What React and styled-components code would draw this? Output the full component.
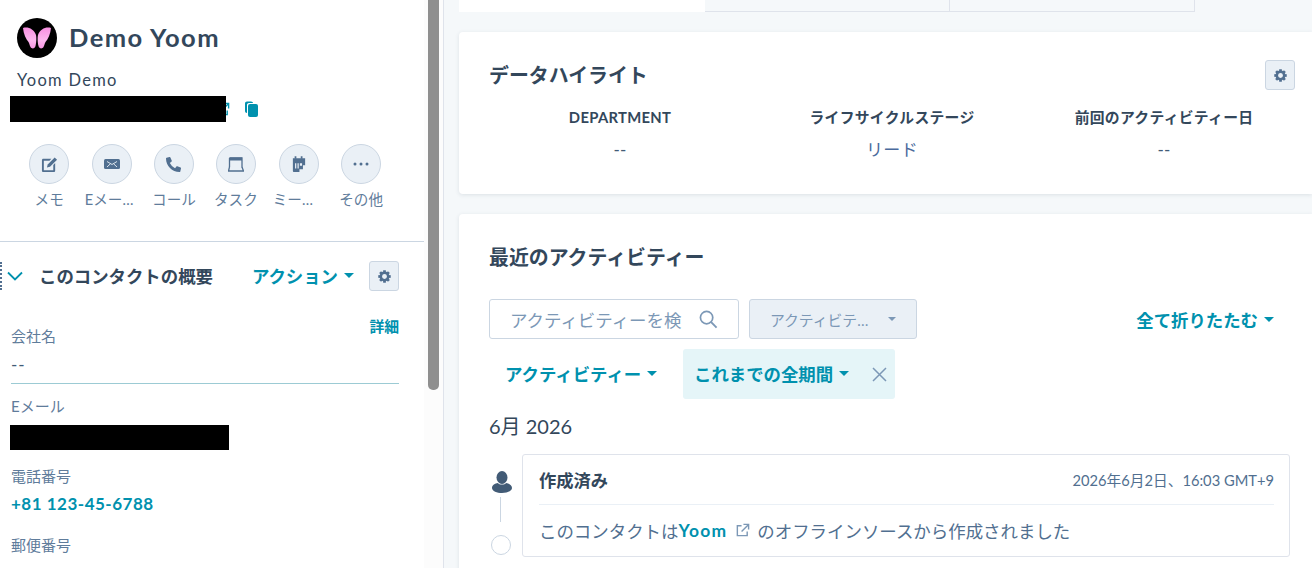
import React from 'react'
import styled, { createGlobalStyle } from 'styled-components'
import { FaPhoneAlt } from 'react-icons/fa'

const teal = '#0091ae'
const slate = '#33475b'
const muted = '#516f90'
const soft = '#7c98b6'

const Global = createGlobalStyle`
  html, body { margin: 0; padding: 0; height: 100%; overflow: hidden; }
  body {
    font-family: "Lato", "Noto Sans CJK JP", sans-serif;
    color: ${slate};
    background: #f5f8fa;
  }
  * { box-sizing: border-box; }
`

const Page = styled.div`
  display: flex;
  width: 1312px;
  height: 568px;
  overflow: hidden;
`

const Sidebar = styled.aside`
  display: flex;
  flex: 0 0 444px;
  height: 568px;
  background: #fff;
  border-right: 1px solid #dfe3eb;
`

const SideBody = styled.div`
  flex: 0 0 424px;
  overflow: hidden;
`

const ScrollGutter = styled.div`
  flex: 0 0 19px;
  display: flex;
  background: #fcfcfc;
  padding-left: 4px;
`

const ScrollThumb = styled.div`
  width: 11px;
  height: 390px;
  background: #8f8f8f;
  border-radius: 0 0 5px 5px;
`

const Identity = styled.div`
  padding: 18px 0 0 10px;
`

const NameRow = styled.div`
  display: flex;
  align-items: center;
  gap: 12px;
  padding-left: 7px;
`

const Avatar = styled.div`
  width: 40px;
  height: 40px;
  border-radius: 50%;
  background: #000;
  display: flex;
  align-items: center;
  justify-content: center;
`

const Name = styled.h1`
  margin: -2px 0 0 0;
  font-size: 25.5px;
  letter-spacing: 1.4px;
  line-height: 40px;
  font-weight: 700;
  color: ${slate};
`

const Company = styled.div`
  margin: 12px 0 0 7px;
  font-size: 16.5px;
  letter-spacing: 1.3px;
  line-height: 20px;
  color: ${slate};
`

const RedactRow = styled.div`
  display: flex;
  align-items: center;
  margin-top: 6px;
  height: 26px;
`

const Redact = styled.div`
  position: relative;
  z-index: 1;
  width: ${p => p.$w}px;
  height: ${p => p.$h}px;
  background: #000;
  flex: none;
`

const EmailRedact = styled(Redact)`
  margin: 9px 0 0 -1px;
`

const LinkIcon = styled.svg`
  flex: none;
  margin-left: ${p => p.$ml || 0}px;
  display: block;
`

const Actions = styled.div`
  display: grid;
  grid-template-columns: repeat(6, 62.4px);
  margin: 22px 0 0 18px;
`

const Action = styled.div`
  display: flex;
  flex-direction: column;
  align-items: center;
`

const ActionCircle = styled.div`
  width: 40px;
  height: 40px;
  border-radius: 50%;
  background: #eaf0f6;
  border: 1px solid #cbd6e2;
  display: flex;
  align-items: center;
  justify-content: center;
`

const ActionLabel = styled.div`
  margin: 7px 0 0 ${p => p.$nudge || 0}px;
  font-size: 14.6px;
  line-height: 18px;
  color: #5f7c9b;
  text-align: center;
  white-space: nowrap;
`

const Divider = styled.div`
  height: 1px;
  margin-top: 32px;
  background: #cbd6e2;
`

const SectionHead = styled.div`
  display: flex;
  align-items: center;
  height: 30px;
  margin-top: 19px;
  padding-right: 25px;
`

const Grip = styled.div`
  width: 2px;
  height: 28px;
  border-left: 2px dotted ${muted};
  flex: none;
`

const Chevron = styled.svg`
  flex: none;
  margin: 0 16px 0 5px;
`

const SectionTitle = styled.h2`
  margin: -2px 0 0 0;
  font-size: 17.4px;
  font-weight: 700;
  flex: 1;
  white-space: nowrap;
`

const TealLink = styled.span`
  display: inline-flex;
  align-items: center;
  gap: ${p => p.$gap ?? 6}px;
  color: ${teal};
  font-size: ${p => p.$size || 17.4}px;
  font-weight: 700;
  white-space: nowrap;
  margin-top: ${p => (p.$lift ? -2 : 0)}px;
`

const Caret = styled.i`
  display: inline-block;
  flex: none;
  width: 0;
  height: 0;
  border-left: ${p => p.$s || 5}px solid transparent;
  border-right: ${p => p.$s || 5}px solid transparent;
  border-top: ${p => p.$s || 5}px solid ${p => p.$color || teal};
`

const GearButton = styled.div`
  width: 30px;
  height: 30px;
  flex: none;
  margin-left: ${p => p.$ml || 0}px;
  background: #eaf0f6;
  border: 1px solid #cbd6e2;
  border-radius: 3px;
  display: flex;
  align-items: center;
  justify-content: center;
`

const Fields = styled.div`
  padding: 24px 25px 0 11px;
`

const Field = styled.div`
  margin-bottom: ${p => p.$mb ?? 14}px;
`

const FieldTop = styled.div`
  display: flex;
  justify-content: space-between;
  align-items: flex-start;
`

const FieldLabel = styled.div`
  font-size: 15px;
  line-height: 20px;
  color: #5f7c9b;
  margin-top: ${p => p.$mt || 0}px;
`

const FieldValue = styled.div`
  font-size: 17px;
  letter-spacing: 1px;
  line-height: 24px;
  margin-top: 7px;
  padding-bottom: 6px;
  color: #425b76;
  border-bottom: 1px solid #9ccbd4;
`

const Phone = styled.div`
  font-size: 17px;
  letter-spacing: 0.5px;
  line-height: 22px;
  font-weight: 700;
  color: ${teal};
  margin-top: 7px;
`

const Main = styled.main`
  flex: 1;
  padding-left: 15px;
  min-width: 0;
`

const Tabs = styled.div`
  display: flex;
  height: 12px;
  width: 736px;
`

const Tab = styled.div`
  flex: 0 0 ${p => (p.$active ? 246 : 245)}px;
  background: ${p => (p.$active ? '#fff' : 'transparent')};
  border-bottom: ${p => (p.$active ? 'none' : '1px solid #dfe3eb')};
  border-right: ${p => (p.$active ? 'none' : '1px solid #dfe3eb')};
`

const Card = styled.section`
  background: #fff;
  border-radius: 4px 0 0 4px;
  box-shadow: 0 1px 4px rgba(45, 62, 80, 0.12);
  margin-top: 20px;
  height: ${p => p.$h}px;
  padding: ${p => p.$pad};
`

const CardHead = styled.div`
  display: flex;
  align-items: center;
  justify-content: space-between;
  height: 30px;
  padding-right: 17px;
`

const CardTitle = styled.h2`
  margin: 0;
  font-size: 19.9px;
  line-height: 30px;
  font-weight: 700;
  color: ${slate};
`

const Highlights = styled.div`
  display: grid;
  grid-template-columns: repeat(3, 272px);
  margin: 17px 0 0 -5px;
`

const Highlight = styled.div`
  text-align: center;
`

const HighlightLabel = styled.div`
  font-size: 14.8px;
  letter-spacing: 0.3px;
  line-height: 20px;
  font-weight: 700;
`

const HighlightValue = styled.div`
  font-size: 17px;
  letter-spacing: 0.3px;
  line-height: 24px;
  margin-top: 11px;
  color: ${p => p.$color || '#425b76'};
`

const FilterRow = styled.div`
  display: flex;
  align-items: center;
  margin-top: 27px;
  padding-right: 38px;
`

const Search = styled.div`
  width: 250px;
  height: 40px;
  border: 1px solid #cbd6e2;
  border-radius: 3px;
  display: flex;
  align-items: center;
  padding: 0 20px 0 20px;
  gap: 17px;
`

const Placeholder = styled.div`
  font-size: 17.45px;
  color: ${soft};
  width: 172px;
  white-space: nowrap;
  flex: none;
`

const Select = styled.div`
  width: 168px;
  height: 40px;
  margin-left: 10px;
  background: #eaf0f6;
  border: 1px solid #cbd6e2;
  border-radius: 3px;
  display: flex;
  align-items: center;
  justify-content: space-between;
  padding: 0 20px;
  font-size: 14.8px;
  color: ${soft};
  white-space: nowrap;
`

const Grow = styled.div`
  flex: 1;
`

const TagRow = styled.div`
  display: flex;
  align-items: center;
  margin-top: 10px;
`

const PlainFilter = styled.div`
  width: 194px;
  padding-left: 16px;
  display: flex;
`

const FilterTag = styled.div`
  width: 212px;
  height: 50px;
  background: #e5f5f8;
  border-radius: 3px;
  display: flex;
  align-items: center;
  padding: 0 8px 0 11px;
  justify-content: space-between;
`

const MonthLabel = styled.div`
  margin-top: 13px;
  font-size: 20px;
  line-height: 28px;
  color: ${slate};
`

const Timeline = styled.div`
  display: flex;
  margin-top: 14px;
  padding-right: 22px;
`

const Rail = styled.div`
  flex: 0 0 33px;
  display: flex;
  flex-direction: column;
  align-items: flex-start;
  padding: 17px 0 0 3px;
`

const RailLine = styled.div`
  width: 1px;
  height: 25px;
  margin: 4px 0 13px 8px;
  background: #cbd6e2;
`

const RailDot = styled.div`
  width: 20px;
  height: 20px;
  margin-left: -1px;
  border: 1px solid #cbd6e2;
  border-radius: 50%;
`

const Event = styled.div`
  flex: 1;
  height: 103px;
  border: 1px solid #dfe3eb;
  border-radius: 3px;
  padding: 0 15px 0 16px;
`

const EventHead = styled.div`
  display: flex;
  align-items: center;
  justify-content: space-between;
  height: 50px;
  border-bottom: 1px solid #eaf0f6;
`

const EventTitle = styled.div`
  font-size: 17.3px;
  font-weight: 700;
`

const EventDate = styled.div`
  font-size: 14.7px;
  color: ${muted};
`

const EventBody = styled.div`
  display: flex;
  align-items: center;
  height: 51px;
  font-size: 17.45px;
  color: ${muted};
  white-space: nowrap;
`

const EventLink = styled.span`
  font-weight: 700;
  letter-spacing: 1.2px;
  color: ${teal};
  margin-right: 8px;
`

const EventTail = styled.span`
  margin-left: 7px;
`

const teeth = [0, 45, 90, 135, 180, 225, 270, 315]

const GearIcon = () => (
  <svg width="13" height="13" viewBox="0 0 24 24">
    {teeth.map(deg => (
      <rect key={deg} x="9.500" y="0.500" width="5" height="6" fill={muted} transform={`rotate(${deg} 12 12)`} />
    ))}
    <circle cx="12" cy="12" r="6.800" fill="none" stroke={muted} strokeWidth="4.500" />
  </svg>
)

const ExternalIcon = ({ color, ml }) => (
  <LinkIcon $ml={ml} width="15" height="15" viewBox="0 0 16 16" fill="none" stroke={color} strokeWidth="1.5">
    <path d="M7 3H2.500v10.500H13V9" />
    <path d="M9 1.500h5.500V7M14.500 1.500 7 9" />
  </LinkIcon>
)

const actions = [
  {
    label: 'メモ',
    icon: (
      <svg width="17" height="17" viewBox="0 0 18 18" fill={muted}>
        <path d="M1 4.500C1 3.600 1.600 3 2.500 3H11L9 5H3v10h10V9.500l2-2V15.500c0 .9-.6 1.500-1.500 1.500h-11C1.600 17 1 16.400 1 15.500z" />
        <path d="M14.500 1.500 17 4l-7.500 7.500-3.200.8.8-3.300z" />
      </svg>
    ),
  },
  {
    label: 'Eメー…',
    nudge: -5,
    icon: (
      <svg width="16" height="10" viewBox="0 0 16 10">
        <rect width="16" height="10" rx="1.500" fill={muted} />
        <path d="M3 2.500l5 3 5-3M3 8l3.400-3.200M13 8 9.600 4.800" fill="none" stroke="#eaf0f6" strokeWidth="0.900" />
      </svg>
    ),
  },
  {
    label: 'コール',
    icon: <FaPhoneAlt size={15} color={muted} />,
  },
  {
    label: 'タスク',
    nudge: -1,
    icon: (
      <svg width="16" height="15" viewBox="0 0 16 15" fill="none">
        <path d="M1.500.5h12.500v3H1.500z" fill={muted} />
        <path d="M1.500 1h12.500v9.500M1.500 1v9" stroke={muted} strokeWidth="1.300" />
        <path d="M1.500 10 .5 14H15.500L14 10" stroke={muted} strokeWidth="1.300" />
      </svg>
    ),
  },
  {
    label: 'ミー…',
    nudge: -12,
    icon: (
      <svg width="14" height="16" viewBox="0 0 16 18" fill={muted}>
        <path d="M3 0h2v3H3zM10 0h2v3h-2z" />
        <path d="M1 2.500h14V6H1zM1 6h14v4.500h-2.500V15H8.500v3H2a1 1 0 0 1-1-1z" />
        <path d="M3.500 8h1.400v6H3.500zM6.300 8h1.400v6H6.300zM9 8h2.500v3H9z" fill="#eaf0f6" />
      </svg>
    ),
  },
  {
    label: 'その他',
    icon: (
      <svg width="16" height="4" viewBox="0 0 16 4" fill={muted}>
        <circle cx="2" cy="2" r="1.500" />
        <circle cx="8" cy="2" r="1.500" />
        <circle cx="14" cy="2" r="1.500" />
      </svg>
    ),
  },
]

const highlights = [
  { label: 'DEPARTMENT', value: '--' },
  { label: 'ライフサイクルステージ', value: 'リード', color: '#4a6a9c' },
  { label: '前回のアクティビティー日', value: '--' },
]

export default function App() {
  return (
    <Page>
      <Global />
      <Sidebar>
        <SideBody>
          <Identity>
            <NameRow>
              <Avatar>
                <svg width="30" height="24" viewBox="0 0 30 24">
                  <defs>
                    <linearGradient id="wing" x1="0" y1="0" x2="0" y2="1">
                      <stop offset="0" stopColor="#f78fe0" />
                      <stop offset="0.6" stopColor="#fcb6ee" />
                      <stop offset="1" stopColor="#f796e2" />
                    </linearGradient>
                  </defs>
                  <path d="M1 2C6 .5 12 3 14 9c.5 2 .5 7-.5 11-.5 2.500-3.500 3.500-5 1-1-1.500-1-3.500-2-5-2.500-3-5-8-5.500-14z" fill="url(#wing)" />
                  <path d="M29 2C24 .5 18 3 16 9c-.5 2-.5 7 .5 11 .5 2.500 3.500 3.500 5 1 1-1.500 1-3.500 2-5 2.500-3 5-8 5.500-14z" fill="url(#wing)" />
                </svg>
              </Avatar>
              <Name>Demo Yoom</Name>
            </NameRow>
            <Company>Yoom Demo</Company>
            <RedactRow>
              <Redact $w={216} $h={26} />
              <ExternalIcon color={teal} ml={-11} />
              <LinkIcon $ml={14} width="15" height="16" viewBox="0 0 15 16" fill={teal}>
                <path d="M1 2.500C1 1.300 1.800.5 3 .5h4c1.200 0 2 .8 2 1.500H5C3.500 2 3 3 3 4v8c-1.200 0-2-.8-2-2z" />
                <rect x="4" y="3" width="10" height="13" rx="2" />
              </LinkIcon>
            </RedactRow>
          </Identity>
          <Actions>
            {actions.map(a => (
              <Action key={a.label}>
                <ActionCircle>{a.icon}</ActionCircle>
                <ActionLabel $nudge={a.nudge}>{a.label}</ActionLabel>
              </Action>
            ))}
          </Actions>
          <Divider />
          <SectionHead>
            <Grip />
            <Chevron width="16" height="10" viewBox="0 0 16 10" fill="none" stroke={teal} strokeWidth="1.800">
              <path d="M1 1.500 8 8.500l7-7" />
            </Chevron>
            <SectionTitle>このコンタクトの概要</SectionTitle>
            <TealLink $lift>アクション<Caret /></TealLink>
            <GearButton $ml={15}><GearIcon /></GearButton>
          </SectionHead>
          <Fields>
            <Field $mb={12}>
              <FieldTop>
                <FieldLabel $mt={11}>会社名</FieldLabel>
                <TealLink $size={14.8}>詳細</TealLink>
              </FieldTop>
              <FieldValue>--</FieldValue>
            </Field>
            <Field $mb={16}>
              <FieldLabel>Eメール</FieldLabel>
              <EmailRedact $w={219} $h={25} />
            </Field>
            <Field $mb={20}>
              <FieldLabel>電話番号</FieldLabel>
              <Phone>+81 123-45-6788</Phone>
            </Field>
            <Field>
              <FieldLabel>郵便番号</FieldLabel>
            </Field>
          </Fields>
        </SideBody>
        <ScrollGutter>
          <ScrollThumb />
        </ScrollGutter>
      </Sidebar>
      <Main>
        <Tabs>
          <Tab $active />
          <Tab />
          <Tab />
        </Tabs>
        <Card $h={162} $pad="28px 0 0 30px">
          <CardHead>
            <CardTitle>データハイライト</CardTitle>
            <GearButton><GearIcon /></GearButton>
          </CardHead>
          <Highlights>
            {highlights.map(h => (
              <Highlight key={h.label}>
                <HighlightLabel>{h.label}</HighlightLabel>
                <HighlightValue $color={h.color}>{h.value}</HighlightValue>
              </Highlight>
            ))}
          </Highlights>
        </Card>
        <Card $h={400} $pad="28px 0 0 30px">
          <CardTitle>最近のアクティビティー</CardTitle>
          <FilterRow>
            <Search>
              <Placeholder>アクティビティーを検</Placeholder>
              <svg width="19" height="19" viewBox="0 0 20 20" fill="none" stroke={soft} strokeWidth="1.800">
                <circle cx="8" cy="8" r="6.500" />
                <path d="M12.800 12.800 18.500 18.500" strokeWidth="2" />
              </svg>
            </Search>
            <Select>アクティビテ…<Caret $color={soft} $s={4.5} /></Select>
            <Grow />
            <TealLink>全て折りたたむ<Caret /></TealLink>
          </FilterRow>
          <TagRow>
            <PlainFilter><TealLink $lift>アクティビティー<Caret /></TealLink></PlainFilter>
            <FilterTag>
              <TealLink $lift>これまでの全期間<Caret /></TealLink>
              <svg width="15" height="15" viewBox="0 0 15 15" stroke={soft} strokeWidth="1.500">
                <path d="M1 1l13 13M14 1 1 14" />
              </svg>
            </FilterTag>
          </TagRow>
          <MonthLabel>6月 2026</MonthLabel>
          <Timeline>
            <Rail>
              <svg width="20" height="22" viewBox="0 0 20 22" fill="#425b76">
                <ellipse cx="10" cy="6.500" rx="5.500" ry="6.500" />
                <path d="M0 17c0-3 3-4.500 6-5 1 2 7 2 8 0 3 .5 6 2 6 5 0 3-5 5-10 5S0 20 0 17z" />
              </svg>
              <RailLine />
              <RailDot />
            </Rail>
            <Event>
              <EventHead>
                <EventTitle>作成済み</EventTitle>
                <EventDate>2026年6月2日、16:03 GMT+9</EventDate>
              </EventHead>
              <EventBody>
                このコンタクトは
                <EventLink>Yoom</EventLink>
                <ExternalIcon color={soft} />
                <EventTail>のオフラインソースから作成されました</EventTail>
              </EventBody>
            </Event>
          </Timeline>
        </Card>
      </Main>
    </Page>
  )
}
